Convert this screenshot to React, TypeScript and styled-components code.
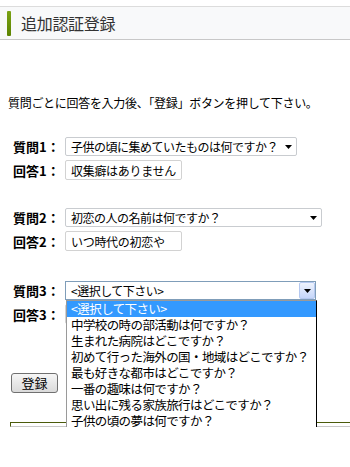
import React from "react";
import styled, { createGlobalStyle } from "styled-components";

const Global = createGlobalStyle`
  html, body { margin: 0; padding: 0; background: #fff; }
  body {
    font-family: "Noto Sans CJK JP", "Noto Sans", sans-serif;
    font-size: 12px;
    color: #000;
  }
`;

const Page = styled.div`
  padding-top: 6px;
  width: 350px;
`;

const Header = styled.div`
  height: 32px;
  border-top: 1px solid #dcdcdc;
  border-bottom: 1px solid #c8c8c8;
  background: #f8f9fa;
  display: flex;
  align-items: center;
  padding-left: 7px;
`;

const GreenBar = styled.div`
  width: 4px;
  height: 25px;
  border-radius: 1px;
  background: linear-gradient(#7aa214, #5b8300);
`;

const Title = styled.h1`
  margin: 0 0 0 10px;
  font-size: 16px;
  font-weight: normal;
  color: #333;
  line-height: 20px;
  letter-spacing: -0.3px;
`;

const Intro = styled.p`
  margin: 55px 0 0;
  padding-left: 8px;
  line-height: 16px;
  letter-spacing: -0.3px;
`;

const Form = styled.div`
  margin-top: 26px;
  padding-left: 13px;
`;

const Group = styled.div<{ $gap: number }>`
  display: flex;
  flex-direction: column;
  gap: 4px;
  margin-bottom: ${(p) => p.$gap}px;
`;

const Row = styled.div`
  display: flex;
  align-items: center;
`;

const Label = styled.span`
  width: 52px;
  font-size: 13px;
  font-weight: bold;
  white-space: nowrap;
`;

const SelectBox = styled.div<{ $w: number; $open?: boolean }>`
  position: relative;
  box-sizing: border-box;
  width: ${(p) => p.$w}px;
  height: 19px;
  border: 1px solid ${(p) => (p.$open ? "#7f9db9" : "#c9ccd0")};
  border-radius: ${(p) => (p.$open ? "0" : "2px")};
  background: #fff;
  display: flex;
  align-items: center;
  justify-content: space-between;
  padding-left: 5px;
  padding-right: ${(p) => (p.$open ? "0" : "2px")};
  letter-spacing: -0.5px;
  white-space: nowrap;
`;

const Caret = styled.span`
  display: flex;
  width: 11px;
  justify-content: center;
`;

const DropButton = styled.span`
  box-sizing: border-box;
  width: 16px;
  height: 17px;
  display: flex;
  align-items: center;
  justify-content: center;
  border: 1px solid #b4c8f0;
  border-radius: 2px;
  background: linear-gradient(#eef3fd, #c5d6fa);
`;

const TextInput = styled.div<{ $w: number }>`
  box-sizing: border-box;
  width: ${(p) => p.$w}px;
  height: 20px;
  border: 1px solid #d2d2d2;
  border-radius: 2px;
  background: #fff;
  display: flex;
  align-items: center;
  padding-left: 5px;
  letter-spacing: -0.3px;
  white-space: nowrap;
`;

const List = styled.ul`
  position: absolute;
  top: 18px;
  left: 0;
  z-index: 10;
  box-sizing: border-box;
  width: 251px;
  margin: 0;
  padding: 0;
  list-style: none;
  background: #fff;
  border: 1px solid #000;
  border-left-color: #9a9a9a;
  border-top-color: #9a9a9a;
`;

const Item = styled.li<{ $sel?: boolean }>`
  height: 16px;
  line-height: 16px;
  padding-left: 4px;
  font-size: 12.5px;
  letter-spacing: -0.6px;
  white-space: nowrap;
  background: ${(p) => (p.$sel ? "#3399ff" : "#fff")};
  color: ${(p) => (p.$sel ? "#fff" : "#000")};
`;

const ButtonRow = styled.div`
  margin-top: 49px;
  padding-left: 11px;
`;

const Button = styled.button`
  box-sizing: border-box;
  width: 47px;
  height: 20px;
  padding: 0;
  border: 1px solid #707070;
  border-radius: 3px;
  background: linear-gradient(#f6f6f6, #dadada);
  font-family: "Noto Sans CJK JP", sans-serif;
  font-size: 13px;
  line-height: 16px;
  color: #000;
`;

const BoxTop = styled.div`
  margin: 29px 0 0 10px;
  height: 3px;
  border-top: 1px solid #4b5b0a;
  border-left: 1px solid #4b5b0a;
  border-bottom: 1px solid #c8c8c8;
`;

const Triangle = () => (
  <svg width="7" height="4" viewBox="0 0 7 4">
    <path d="M0 0 H7 L3.5 4 Z" fill="#000" />
  </svg>
);

const options = [
  "<選択して下さい>",
  "中学校の時の部活動は何ですか？",
  "生まれた病院はどこですか？",
  "初めて行った海外の国・地域はどこですか？",
  "最も好きな都市はどこですか？",
  "一番の趣味は何ですか？",
  "思い出に残る家族旅行はどこですか？",
  "子供の頃の夢は何ですか？",
];

export default function App() {
  return (
    <Page>
      <Global />
      <Header>
        <GreenBar />
        <Title>追加認証登録</Title>
      </Header>
      <Intro>質問ごとに回答を入力後、「登録」ボタンを押して下さい。</Intro>
      <Form>
        <Group $gap={28}>
          <Row>
            <Label>質問1：</Label>
            <SelectBox $w={232}>
              <span>子供の頃に集めていたものは何ですか？</span>
              <Caret>
                <Triangle />
              </Caret>
            </SelectBox>
          </Row>
          <Row>
            <Label>回答1：</Label>
            <TextInput $w={117}>収集癖はありません</TextInput>
          </Row>
        </Group>
        <Group $gap={30}>
          <Row>
            <Label>質問2：</Label>
            <SelectBox $w={257}>
              <span>初恋の人の名前は何ですか？</span>
              <Caret>
                <Triangle />
              </Caret>
            </SelectBox>
          </Row>
          <Row>
            <Label>回答2：</Label>
            <TextInput $w={117}>いつ時代の初恋や</TextInput>
          </Row>
        </Group>
        <Group $gap={0}>
          <Row>
            <Label>質問3：</Label>
            <SelectBox $w={251} $open>
              <span>&lt;選択して下さい&gt;</span>
              <DropButton>
                <Triangle />
              </DropButton>
              <List>
                {options.map((o, i) => (
                  <Item key={o} $sel={i === 0}>
                    {o}
                  </Item>
                ))}
              </List>
            </SelectBox>
          </Row>
          <Row>
            <Label>回答3：</Label>
            <TextInput $w={117} />
          </Row>
        </Group>
      </Form>
      <ButtonRow>
        <Button>登録</Button>
      </ButtonRow>
      <BoxTop />
    </Page>
  );
}
